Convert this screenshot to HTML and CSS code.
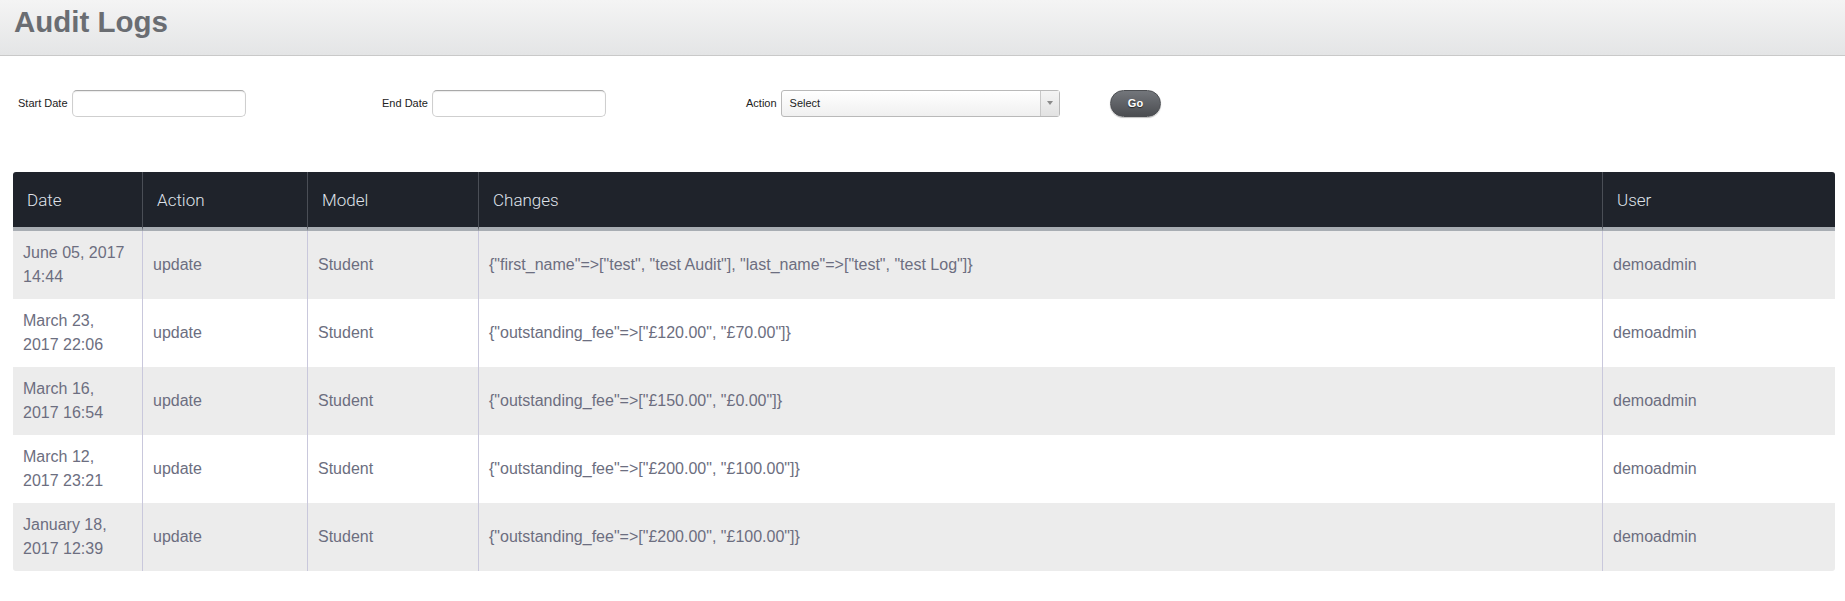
FILE: index.html
```html
<!DOCTYPE html>
<html lang="en">
<head>
    <meta charset="UTF-8">
    <title>Audit Logs</title>
    <link rel="stylesheet" href="styles.css">
</head>
<body>
    <div class="page-header">
        <h1>Audit Logs</h1>
    </div>

    <form class="filters">
        <div class="field">
            <label>Start Date</label>
            <input type="text" class="date-input">
        </div>
        <div class="field">
            <label>End Date</label>
            <input type="text" class="date-input">
        </div>
        <div class="field">
            <label>Action</label>
            <div class="select">
                <span class="select-text">Select</span>
                <span class="select-arrow"></span>
            </div>
        </div>
        <button type="button" class="go-btn">Go</button>
    </form>

    <table class="logs">
        <colgroup>
            <col class="c-date">
            <col class="c-action">
            <col class="c-model">
            <col class="c-changes">
            <col class="c-user">
        </colgroup>
        <thead>
            <tr>
                <th>Date</th>
                <th>Action</th>
                <th>Model</th>
                <th>Changes</th>
                <th>User</th>
            </tr>
        </thead>
        <tbody>
            <tr>
                <td>June 05, 2017 14:44</td>
                <td>update</td>
                <td>Student</td>
                <td>{"first_name"=&gt;["test", "test Audit"], "last_name"=&gt;["test", "test Log"]}</td>
                <td>demoadmin</td>
            </tr>
            <tr>
                <td>March 23, 2017 22:06</td>
                <td>update</td>
                <td>Student</td>
                <td>{"outstanding_fee"=&gt;["£120.00", "£70.00"]}</td>
                <td>demoadmin</td>
            </tr>
            <tr>
                <td>March 16, 2017 16:54</td>
                <td>update</td>
                <td>Student</td>
                <td>{"outstanding_fee"=&gt;["£150.00", "£0.00"]}</td>
                <td>demoadmin</td>
            </tr>
            <tr>
                <td>March 12, 2017 23:21</td>
                <td>update</td>
                <td>Student</td>
                <td>{"outstanding_fee"=&gt;["£200.00", "£100.00"]}</td>
                <td>demoadmin</td>
            </tr>
            <tr>
                <td>January 18, 2017 12:39</td>
                <td>update</td>
                <td>Student</td>
                <td>{"outstanding_fee"=&gt;["£200.00", "£100.00"]}</td>
                <td>demoadmin</td>
            </tr>
        </tbody>
    </table>
</body>
</html>
```

FILE: styles.css
```css
body {
    margin: 0;
    background-color: #fff;
    font-family: "Liberation Sans", Arial, sans-serif;
    color: #333;
}
.page-header {
    height: 56px;
    background: linear-gradient(#f4f4f4, #e4e5e6);
    border-bottom: 1px solid #c9c9c9;
    box-sizing: border-box;
}
.page-header h1 {
    margin: 0;
    padding: 5px 0 0 14px;
    font-size: 29.5px;
    font-weight: bold;
    color: #6a6d72;
}
.filters {
    display: flex;
    align-items: center;
    margin: 33px 0 0 18px;
    height: 28px;
}
.field {
    width: 364px;
    display: flex;
    align-items: center;
}
.field label {
    font-size: 11px;
    color: #222;
    margin-right: 4px;
}
.date-input {
    width: 174px;
    height: 27px;
    box-sizing: border-box;
    border: 1px solid #cfcfcf;
    border-top-color: #a9a9a9;
    border-radius: 5px;
    box-shadow: inset 0 1px 1px rgba(0, 0, 0, 0.08);
    background: #fff;
}
.select {
    width: 279px;
    height: 27px;
    box-sizing: border-box;
    border: 1px solid #b9b9b9;
    border-radius: 3px;
    background: linear-gradient(#fff, #f0f0f0);
    display: flex;
    align-items: center;
    font-size: 11px;
    color: #222;
}
.select-text {
    flex: 1;
    padding-left: 8px;
}
.select-arrow {
    width: 18px;
    height: 100%;
    border-left: 1px solid #c8c8c8;
    background: linear-gradient(#f4f4f4, #e2e2e2);
    display: flex;
    align-items: center;
    justify-content: center;
}
.select-arrow::after {
    content: "";
    border-left: 3px solid transparent;
    border-right: 3px solid transparent;
    border-top: 4px solid #8a8a8a;
}
.go-btn {
    width: 51px;
    height: 27px;
    border: 1px solid #4c4e52;
    border-radius: 14px;
    background: linear-gradient(#73767b, #4b4d51);
    color: #fff;
    font-family: "Liberation Sans", Arial, sans-serif;
    font-size: 11px;
    font-weight: bold;
    text-shadow: 0 1px 1px rgba(0, 0, 0, 0.6);
    cursor: pointer;
    box-shadow: 0 1px 1px rgba(0, 0, 0, 0.25);
}
.logs {
    margin: 55px 10px 0 13px;
    width: 1822px;
    border-collapse: separate;
    border-spacing: 0;
    table-layout: fixed;
    font-size: 16px;
}
.c-date { width: 129px; }
.c-action { width: 165px; }
.c-model { width: 171px; }
.c-changes { width: 1124px; }
.c-user { width: 233px; }
.logs th {
    background-color: #1f232b;
    color: #dfe2ea;
    font-family: Roboto, "Liberation Sans", Arial, sans-serif;
    font-weight: 300;
    font-size: 17px;
    text-align: left;
    height: 55px;
    padding: 0 14px;
    border-bottom: 4px solid #a8adb3;
    border-left: 1px solid #4a4e56;
}
.logs th:first-child {
    border-left: none;
    border-top-left-radius: 3px;
}
.logs th:last-child {
    border-top-right-radius: 3px;
}
.logs td {
    height: 68px;
    box-sizing: border-box;
    padding: 0 10px;
    line-height: 24px;
    color: #6c6e80;
    border-left: 1px solid #c9c8dc;
    vertical-align: middle;
}
.logs td:first-child {
    border-left: none;
}
.logs tbody tr:nth-child(odd) td {
    background-color: #ececec;
}
.logs tbody tr:last-child td:first-child {
    border-bottom-left-radius: 3px;
}
.logs tbody tr:last-child td:last-child {
    border-bottom-right-radius: 3px;
}
```
